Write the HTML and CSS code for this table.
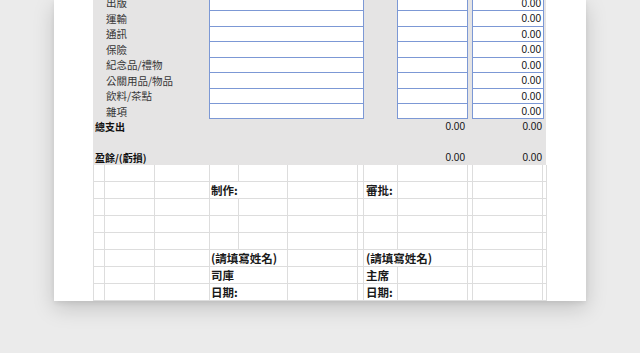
FILE: index.html
```html
<!DOCTYPE html>
<html lang="zh-Hant">
<head>
<meta charset="utf-8">
<title>支出表</title>
<link rel="stylesheet" href="styles.css">
</head>
<body>
<div class="page">
  <section class="summary">
    <div class="label">出版</div><div class="box a"></div><div class="box b"></div><div class="box c num">0.00</div>
    <div class="label">運輸</div><div class="box a"></div><div class="box b"></div><div class="box c num">0.00</div>
    <div class="label">通訊</div><div class="box a"></div><div class="box b"></div><div class="box c num">0.00</div>
    <div class="label">保險</div><div class="box a"></div><div class="box b"></div><div class="box c num">0.00</div>
    <div class="label">紀念品/禮物</div><div class="box a"></div><div class="box b"></div><div class="box c num">0.00</div>
    <div class="label">公關用品/物品</div><div class="box a"></div><div class="box b"></div><div class="box c num">0.00</div>
    <div class="label">飲料/茶點</div><div class="box a"></div><div class="box b"></div><div class="box c num">0.00</div>
    <div class="label">雜項</div><div class="box a last"></div><div class="box b last"></div><div class="box c num last">0.00</div>
    <div class="label total">總支出</div><div class="num b tot">0.00</div><div class="num c">0.00</div>
    <div class="label"></div>
    <div class="label total">盈餘/(虧損)</div><div class="num b tot">0.00</div><div class="num c">0.00</div>
  </section>
  <section class="signoff">
    <div></div><div></div><div></div><div></div><div></div><div></div><div></div><div></div><div></div><div></div><div></div><div></div>
    <div></div><div></div><div></div><div class="t span2">制作:</div><div></div><div></div><div class="t r">審批:</div><div></div><div></div><div></div><div></div>
    <div></div><div></div><div></div><div></div><div></div><div></div><div></div><div></div><div></div><div></div><div></div><div></div>
    <div></div><div></div><div></div><div></div><div></div><div></div><div></div><div></div><div></div><div></div><div></div><div></div>
    <div></div><div></div><div></div><div></div><div></div><div></div><div></div><div></div><div></div><div></div><div></div><div></div>
    <div></div><div></div><div></div><div class="t span2">(請填寫姓名)</div><div></div><div></div><div class="t r span2">(請填寫姓名)</div><div></div><div></div><div></div>
    <div></div><div></div><div></div><div class="t span2">司庫</div><div></div><div></div><div class="t r">主席</div><div></div><div></div><div></div><div></div>
    <div></div><div></div><div></div><div class="t span2">日期:</div><div></div><div></div><div class="t r">日期:</div><div></div><div></div><div></div><div></div>
  </section>
</div>
</body>
</html>
```

FILE: styles.css
```css
html, body {
  margin: 0;
  padding: 0;
}

body {
  background: #ebebeb;
  height: 353px;
  overflow: hidden;
  font-family: "Noto Sans CJK TC", "Noto Sans", sans-serif;
}

.page {
  margin-left: 54px;
  width: 532px;
  height: 301px;
  box-sizing: border-box;
  padding-left: 39px;
  background: #ffffff;
  box-shadow: 0 7px 20px rgba(0, 0, 0, 0.17), 0 2px 5px rgba(0, 0, 0, 0.07);
  overflow: hidden;
}

/* upper shaded block */
.summary {
  width: 453px;
  margin-top: -5px;
  background: #e5e4e4;
  display: grid;
  grid-template-columns: 116px 155px 33px 71px 4px 72px 2px;
  grid-template-rows: 15px 16px 15px 16px 15px 16px 15px 16px 15px 16px 15px;
}

.label {
  grid-column: 1;
  display: flex;
  align-items: center;
  padding-left: 13px;
  font-size: 10.5px;
  color: #363636;
  white-space: nowrap;
}

.label.total {
  padding-left: 2px;
  font-size: 10px;
  font-weight: 700;
  color: #111111;
}

.box {
  background: #ffffff;
  border: 1px solid #7c98d5;
  border-bottom: none;
}

.box.last {
  border-bottom: 1px solid #7c98d5;
}

.a { grid-column: 2; }
.b { grid-column: 4; }
.c { grid-column: 6; }

.num {
  display: flex;
  align-items: center;
  justify-content: flex-end;
  padding-right: 2px;
  font-family: "Liberation Sans", Arial, sans-serif;
  font-size: 10px;
  color: #111111;
}

.num.tot {
  padding-right: 3px;
}

/* lower grid */
.signoff {
  width: 454px;
  box-sizing: border-box;
  padding: 0 1px 1px;
  background: #dddddd;
  display: grid;
  grid-template-columns: 10px 49px 54px 28px 48px 69px 5px 33px 69px 4px 69px 3px;
  grid-auto-rows: 16px;
  gap: 1px;
}

.signoff > div {
  background: #ffffff;
}

.signoff .t {
  display: flex;
  align-items: center;
  padding-left: 1px;
  font-size: 11.5px;
  font-weight: 700;
  color: #1a1a1a;
  white-space: nowrap;
}

.signoff .t.r {
  padding-left: 2px;
}

.span2 {
  grid-column: span 2;
}
```
